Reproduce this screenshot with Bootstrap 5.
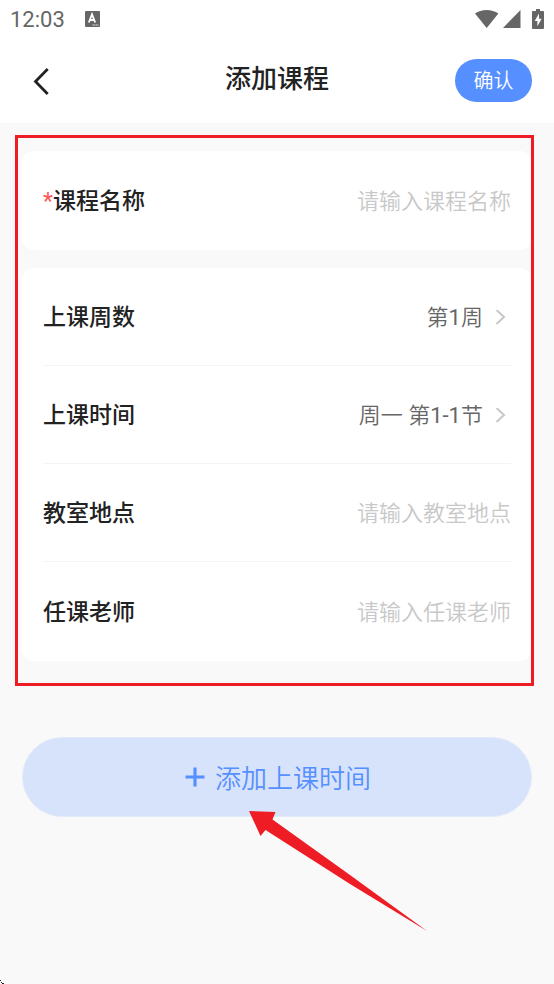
<!DOCTYPE html>
<html lang="zh-CN">
<head>
<meta charset="utf-8">
<meta name="viewport" content="width=device-width, initial-scale=1">
<title>添加课程</title>
<link href="https://cdn.jsdelivr.net/npm/bootstrap@5.3.0/dist/css/bootstrap.min.css" rel="stylesheet">
<style>
  body { font-family: Roboto, "Noto Sans CJK SC", sans-serif; background: #f9f9f9; color: #222; }
  svg { display: block; flex: none; }
  .status-bar { height: 38px; padding: 0 10px; font-size: 22px; color: #666; }
  .status-left { gap: 20px; }
  .status-right { gap: 4px; }
  .title-bar { height: 85px; padding: 0 22px; }
  .title-bar > * { flex: 1 1 0; }
  .page-title { font-size: 26px; font-weight: 500; line-height: 32px; padding-bottom: 4px; }
  .btn-back { padding: 0 11px; border: 0; }
  .btn-confirm { width: 77px; height: 43px; padding: 0; font-size: 20px; font-weight: 350; border: 0; background: #568fff; color: #fff; }
  .form-area { padding: 28px 22px 0; }
  .course-form { gap: 18px; }
  .panel { padding: 0 21px 1px; border: 0; border-radius: 12px; }
  .field-row { height: 98px; gap: 12px; padding-top: 3px; border-bottom: 1px solid #f4f4f4; }
  .field-row:last-child { border-bottom: 0; }
  .field-label { font-size: 23px; font-weight: 500; line-height: 32px; white-space: nowrap; }
  .required { color: #ff5757; font-weight: 400; }
  .field-input, .field-value { font-size: 22px; font-weight: 350; line-height: 32px; padding: 0; border: 0; text-align: right; }
  .field-input { flex: 1 1 0; min-width: 0; background: transparent; color: #666; }
  .field-input::placeholder { color: #c8c8c8; opacity: 1; }
  .field-value { color: #666; gap: 12px; padding-right: 5px; }
  .digits { font-weight: 400; }
  .highlight { position: absolute; inset: -16px -2px -25px -7px; border: 3px solid #ee1c25; pointer-events: none; }
  .add-area { margin-top: 76px; padding-bottom: 120px; }
  .btn-add { height: 80px; padding: 4px 0 0 2px; gap: 10px; font-size: 26px; font-weight: 350; color: #568fff; background: #d7e3fb; border: 1px solid #e3ebfb; }
  .btn-add:hover { color: #568fff; background: #cbdaf8; }
  .pointer-mark { position: absolute; left: 227px; top: 73px; pointer-events: none; }
  .corner-mark { position: fixed; left: 0; bottom: 0; }
</style>
</head>
<body>
<header class="bg-white">
  <div class="status-bar d-flex align-items-center justify-content-between">
    <div class="status-left d-flex align-items-center">
      <span>12:03</span>
      <svg width="15" height="16" viewBox="0 0 15 16" aria-hidden="true"><path fill="#666" d="M1 0h13a1 1 0 0 1 1 1v14a1 1 0 0 1-1 1H1a1 1 0 0 1-1-1V1a1 1 0 0 1 1-1z"/><path fill="none" stroke="#fff" stroke-width="1.8" d="M3.800 11.500 7 3.300 10.200 11.500M5 9h4.500"/><path stroke="#fff" stroke-width="1.200" stroke-dasharray="1.200 .6" d="M7.500 14h6"/></svg>
    </div>
    <div class="status-right d-flex align-items-center">
      <svg width="24" height="20" viewBox="0 0 24 20" aria-hidden="true"><path fill="#666" d="M0 4.500Q5 1 11.700 1t11.700 3.500L11.700 19z"/></svg>
      <svg width="18" height="20" viewBox="0 0 18 20" aria-hidden="true"><path fill="#666" d="M17.500 1v18H0z"/></svg>
      <svg width="19" height="22" viewBox="0 0 19 22" aria-hidden="true"><path fill="#666" d="M11 1h4v2h3q1 0 1 1v16q0 1-1 1H8q-1 0-1-1V4q0-1 1-1h3z"/><path fill="#fff" d="M14 5.500 9.700 13H12.400v5.300L16.600 10.700H14z"/></svg>
    </div>
  </div>
  <nav class="title-bar d-flex align-items-center" aria-label="页面导航">
    <div class="d-flex">
      <button type="button" class="btn btn-back" aria-label="返回">
        <svg width="17" height="28" viewBox="0 0 17 28" aria-hidden="true"><path fill="none" stroke="#222" stroke-width="2.800" d="M14.700 2 2.500 14.500 14.700 27"/></svg>
      </button>
    </div>
    <h1 class="page-title text-center mb-0">添加课程</h1>
    <div class="d-flex justify-content-end">
      <button type="submit" form="course" class="btn btn-confirm rounded-pill">确认</button>
    </div>
  </nav>
</header>

<main class="form-area">
  <form id="course">
    <div class="course-form position-relative d-flex flex-column">
      <section class="card panel">
        <div class="field-row d-flex align-items-center">
          <label class="field-label" for="name"><span class="required">*</span>课程名称</label>
          <input class="field-input" id="name" type="text" placeholder="请输入课程名称">
        </div>
      </section>
      <section class="card panel">
        <div class="field-row d-flex align-items-center justify-content-between">
          <label class="field-label" for="weeks">上课周数</label>
          <button type="button" id="weeks" class="btn field-value d-flex align-items-center">
            <span>第<span class="digits">1</span>周</span>
            <svg width="11" height="16" viewBox="0 0 11 16" aria-hidden="true"><path fill="none" stroke="#c8c8c8" stroke-width="2" d="M1.500 0 9 7l-7.500 7"/></svg>
          </button>
        </div>
        <div class="field-row d-flex align-items-center justify-content-between">
          <label class="field-label" for="time">上课时间</label>
          <button type="button" id="time" class="btn field-value d-flex align-items-center">
            <span>周一 第<span class="digits">1-1</span>节</span>
            <svg width="11" height="16" viewBox="0 0 11 16" aria-hidden="true"><path fill="none" stroke="#c8c8c8" stroke-width="2" d="M1.500 0 9 7l-7.500 7"/></svg>
          </button>
        </div>
        <div class="field-row d-flex align-items-center">
          <label class="field-label" for="room">教室地点</label>
          <input class="field-input" id="room" type="text" placeholder="请输入教室地点">
        </div>
        <div class="field-row d-flex align-items-center">
          <label class="field-label" for="teacher">任课老师</label>
          <input class="field-input" id="teacher" type="text" placeholder="请输入任课老师">
        </div>
      </section>
      <div class="highlight" aria-hidden="true"></div>
    </div>
    <div class="add-area position-relative">
      <button type="button" class="btn btn-add rounded-pill w-100 d-flex align-items-center justify-content-center">
        <svg class="mb-1" width="20" height="20" viewBox="0 0 20 20" aria-hidden="true"><path fill="none" stroke="#568fff" stroke-width="3.200" d="M10 .5v19M.5 10h19"/></svg>
        添加上课时间
      </button>
      <svg class="pointer-mark" width="180" height="122" viewBox="0 0 180 122" aria-hidden="true"><path fill="#ee1c25" d="M0 1 26.500 2 23.500 9.500 101 65 178 121 101 74 16.500 20 11.500 26z"/></svg>
    </div>
  </form>
</main>
<svg class="corner-mark" width="4" height="4" viewBox="0 0 4 4" aria-hidden="true"><path fill="#222" d="M0 0h1v1H0zM1 2h1v1H1zM2 3h2v1H2z"/></svg>
<script src="https://cdn.jsdelivr.net/npm/bootstrap@5.3.0/dist/js/bootstrap.bundle.min.js"></script>
</body>
</html>
